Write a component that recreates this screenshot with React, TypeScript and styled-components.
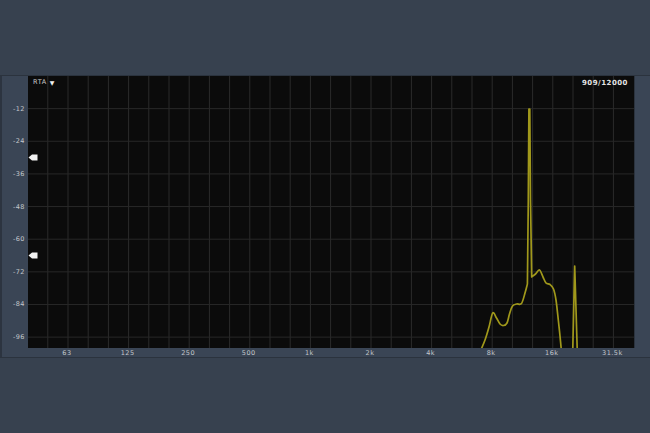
import React from 'react';
import styled, {createGlobalStyle} from 'styled-components';

// ==================== 常量 ====================

const PLOT_W = 606;
const PLOT_H = 272;
const DB_RANGE = 100;          // 0 ~ -100 dB
const OCTAVE_PX = 60.6;        // 每倍频程像素
const REF_X = 40;              // 63Hz 所在位置
const OFFSET_X = 28;           // 绘图区在页面中的偏移
const OFFSET_Y = 76;

type Pt = [number, number];

const dbToY = (db: number) => (-db / DB_RANGE) * PLOT_H;

const DB_TICKS = [-12, -24, -36, -48, -60, -72, -84, -96];
const FREQ_TICKS = ['63', '125', '250', '500', '1k', '2k', '4k', '8k', '16k', '31.5k'];

// 三分之一倍频程网格
const GRID_X = Array.from({length: 29}, (_, i) => REF_X + (OCTAVE_PX / 3) * (i - 1)).filter(x => x > 0 && x < PLOT_W);

// 频谱曲线（页面坐标），分段：平滑段 / 尖峰 / 平滑段
const LOW_BAND: Pt[] = [
    [480, 352], [485, 340], [489, 327], [492.7, 313], [496.5, 318], [500, 324], [503.5, 325.5],
    [507, 323], [509.5, 314], [512.5, 306], [516.7, 304], [521.5, 303.5], [525, 293], [527.4, 284],
];
const PEAK: Pt[] = [[528.3, 200], [528.9, 109], [529.8, 109], [530.5, 200], [531.7, 277]];
const HIGH_BAND: Pt[] = [
    [531.7, 277], [535.5, 274], [539.5, 270], [543, 277], [546, 283], [550, 284.5], [553.5, 289],
    [556, 300], [558.3, 320], [560, 336], [561.5, 352],
];
const SPIKE: Pt[] = [[572.7, 352], [574.7, 266], [577.3, 352]];

const local = ([x, y]: Pt): Pt => [x - OFFSET_X, y - OFFSET_Y];
const fmt = ([x, y]: Pt) => `${x.toFixed(2)} ${y.toFixed(2)}`;

// Catmull-Rom 转贝塞尔，让曲线更圆滑
const smooth = (pts: Pt[]) => {
    const p = pts.map(local);
    let d = '';
    for (let i = 0; i < p.length - 1; i++) {
        const p0 = p[i - 1] || p[i];
        const p1 = p[i];
        const p2 = p[i + 1];
        const p3 = p[i + 2] || p2;
        const c1: Pt = [p1[0] + (p2[0] - p0[0]) / 6, p1[1] + (p2[1] - p0[1]) / 6];
        const c2: Pt = [p2[0] - (p3[0] - p1[0]) / 6, p2[1] - (p3[1] - p1[1]) / 6];
        d += ` C${fmt(c1)} ${fmt(c2)} ${fmt(p2)}`;
    }
    return d;
};

const straight = (pts: Pt[]) => pts.map(pt => ` L${fmt(local(pt))}`).join('');

const CURVE_D = `M${fmt(local(LOW_BAND[0]))}${smooth(LOW_BAND)}${straight(PEAK)}${smooth(HIGH_BAND)}`;
const SPIKE_D = `M${fmt(local(SPIKE[0]))}${straight(SPIKE.slice(1))}`;

const MARKERS = [-30, -66];

// ==================== 样式组件 ====================

const GlobalStyle = createGlobalStyle`
  html, body {
    margin: 0;
    padding: 0;
    background: #37414f;
  }
  body {
    font-family: "DejaVu Sans", "Liberation Sans", sans-serif;
  }
`;

const Page = styled.div`
  width: 650px;
  height: 433px;
  display: flex;
  flex-direction: column;
  overflow: hidden;
`;

const TopSpace = styled.div`
  height: 75px;
  flex-shrink: 0;
`;

const Panel = styled.div`
  display: flex;
  flex-direction: column;
  border-top: 1px solid #2b333e;
  border-bottom: 1px solid #2b333e;
  background: #3a4555;
`;

const Row = styled.div<{ $h: number }>`
  display: flex;
  height: ${p => p.$h}px;
`;

const SideColumn = styled.div`
  position: relative;
  width: 26px;
  flex-shrink: 0;
  border-left: 2px solid #2c3440;
`;

const RightGutter = styled.div<{ $border?: boolean }>`
  flex: 1;
  border-left: 1px solid ${p => (p.$border ? '#2b333e' : 'transparent')};
`;

const Plot = styled.div`
  position: relative;
  width: ${PLOT_W}px;
  height: ${PLOT_H}px;
  flex-shrink: 0;
  background: #0b0b0b;
`;

const XAxis = styled.div`
  position: relative;
  width: ${PLOT_W}px;
  flex-shrink: 0;
`;

const TickLabel = styled.span`
  position: absolute;
  font-size: 6.5px;
  line-height: 8px;
  letter-spacing: 0.5px;
  color: #c3c7cc;
  white-space: nowrap;
`;

const YLabel = styled(TickLabel)`
  right: 3px;
  transform: translateY(-50%);
`;

const XLabel = styled(TickLabel)`
  top: 1px;
  transform: translateX(-50%);
`;

const ModeButton = styled.div`
  position: absolute;
  top: 2px;
  left: 5px;
  display: flex;
  align-items: center;
  gap: 3px;
  font-size: 6.5px;
  letter-spacing: 0.6px;
  color: #c9c9c9;
`;

const Caret = styled.span`
  font-size: 6px;
  color: #f0f0f0;
`;

const Counter = styled.div`
  position: absolute;
  top: 3px;
  right: 6px;
  font-size: 7px;
  font-weight: bold;
  letter-spacing: 0.5px;
  color: #e4e4e4;
`;

const Svg = styled.svg`
  position: absolute;
  inset: 0;
  display: block;
`;

// ==================== 主组件 ====================

const App: React.FC = () => {
    return (
        <Page>
            <GlobalStyle/>
            <TopSpace/>
            <Panel>
                <Row $h={PLOT_H}>
                    <SideColumn>
                        {DB_TICKS.map(db => (
                            <YLabel key={db} style={{top: dbToY(db)}}>{db}</YLabel>
                        ))}
                    </SideColumn>
                    <Plot>
                        <Svg width={PLOT_W} height={PLOT_H} viewBox={`0 0 ${PLOT_W} ${PLOT_H}`}>
                            {GRID_X.map(x => (
                                <line key={x} x1={x} x2={x} y1={0} y2={PLOT_H} stroke="#2b2b2b" strokeWidth={1}/>
                            ))}
                            {DB_TICKS.map(db => (
                                <line key={db} x1={0} x2={PLOT_W} y1={dbToY(db)} y2={dbToY(db)} stroke="#282828" strokeWidth={1}/>
                            ))}
                            <path d={CURVE_D} fill="none" stroke="#a0981b" strokeWidth={1.7} strokeLinejoin="round"/>
                            <path d={SPIKE_D} fill="none" stroke="#a0981b" strokeWidth={1.7} strokeLinejoin="round"/>
                            {MARKERS.map(db => {
                                const y = dbToY(db);
                                return (
                                    <polygon key={db} fill="#f2f2f2"
                                             points={`0.5,${y} 4,${y - 3} 9.5,${y - 3} 9.5,${y + 3} 4,${y + 3}`}/>
                                );
                            })}
                        </Svg>
                        <ModeButton>RTA <Caret>▼</Caret></ModeButton>
                        <Counter>909/12000</Counter>
                    </Plot>
                    <RightGutter $border/>
                </Row>
                <Row $h={9}>
                    <SideColumn/>
                    <XAxis>
                        {FREQ_TICKS.map((f, i) => (
                            <XLabel key={f} style={{left: REF_X + OCTAVE_PX * i - 1}}>{f}</XLabel>
                        ))}
                    </XAxis>
                    <RightGutter/>
                </Row>
            </Panel>
        </Page>
    );
};

export default App;
